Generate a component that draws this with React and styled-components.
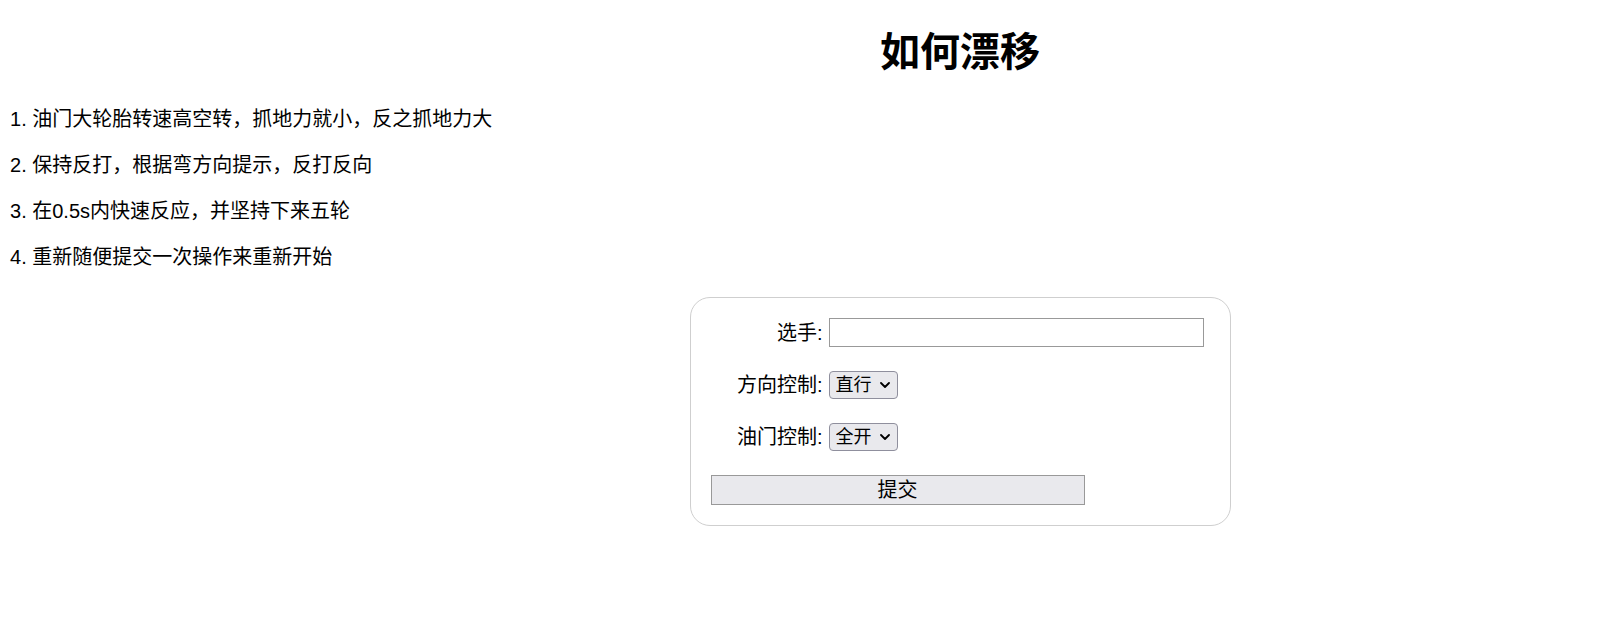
import React from "react";
import styled, { createGlobalStyle } from "styled-components";

const GlobalStyle = createGlobalStyle`
  body {
    margin: 0;
    background: #fff;
    color: #000;
    font-family: "Liberation Sans", "Noto Sans CJK SC", sans-serif;
  }
`;

const steps = [
  "油门大轮胎转速高空转，抓地力就小，反之抓地力大",
  "保持反打，根据弯方向提示，反打反向",
  "在0.5s内快速反应，并坚持下来五轮",
  "重新随便提交一次操作来重新开始",
];

const Chevron = () => (
  <Arrow viewBox="0 0 10 6" aria-hidden="true">
    <path d="M1 1l4 4 4-4" />
  </Arrow>
);

const Dropdown = ({ id, defaultValue, options }) => (
  <SelectWrap>
    <Select id={id} defaultValue={defaultValue}>
      {options.map((o) => (
        <option key={o.value} value={o.value}>
          {o.label}
        </option>
      ))}
    </Select>
    <Chevron />
  </SelectWrap>
);

const App = () => {
  return (
    <Page>
      <GlobalStyle />
      <Stage>
        <Title>如何漂移</Title>
      </Stage>
      <Steps>
        {steps.map((text, i) => (
          <Step key={i}>
            {i + 1}. {text}
          </Step>
        ))}
      </Steps>
      <Stage>
        <FormBox onSubmit={(e) => e.preventDefault()}>
          <Row>
            <Label htmlFor="player">选手:</Label>
            <TextInput id="player" type="text" />
          </Row>
          <Row>
            <Label htmlFor="dir">方向控制:</Label>
            <Dropdown
              id="dir"
              defaultValue="straight"
              options={[
                { value: "straight", label: "直行" },
                { value: "left", label: "左转" },
                { value: "right", label: "右转" },
              ]}
            />
          </Row>
          <Row>
            <Label htmlFor="gas">油门控制:</Label>
            <Dropdown
              id="gas"
              defaultValue="full"
              options={[
                { value: "full", label: "全开" },
                { value: "half", label: "半开" },
                { value: "off", label: "关闭" },
              ]}
            />
          </Row>
          <SubmitButton type="submit">提交</SubmitButton>
        </FormBox>
      </Stage>
    </Page>
  );
};

export default App;

const Page = styled.div`
  padding: 26px 8px 40px 10px;
`;

const Stage = styled.div`
  display: flex;
  justify-content: center;
  padding-left: 312px;
`;

const Title = styled.h1`
  margin: 0;
  font-size: 40px;
  line-height: 52px;
  font-weight: 700;
`;

const Steps = styled.div`
  display: flex;
  flex-direction: column;
  gap: 20px;
  margin: 28px 0 27px;
`;

const Step = styled.p`
  margin: 0;
  font-size: 20px;
  line-height: 26px;
`;

const FormBox = styled.form`
  box-sizing: border-box;
  width: 541px;
  padding: 20px;
  border: 1px solid #cfcfcf;
  border-radius: 20px;
  display: flex;
  flex-direction: column;
  gap: 24px;
`;

const Row = styled.div`
  display: grid;
  grid-template-columns: 112px auto;
  column-gap: 6px;
  align-items: center;
  justify-content: start;
`;

const Label = styled.label`
  text-align: right;
  font-size: 20px;
  line-height: 26px;
`;

const TextInput = styled.input`
  box-sizing: border-box;
  width: 375px;
  height: 29px;
  margin: 0;
  border: 1px solid #999;
  border-radius: 0;
  padding: 2px 4px;
  font-size: 18px;
  font-family: inherit;
  outline: none;
`;

const SelectWrap = styled.span`
  position: relative;
  display: inline-block;
  width: 69px;
  height: 28px;
`;

const Select = styled.select`
  appearance: none;
  box-sizing: border-box;
  width: 69px;
  height: 28px;
  margin: 0;
  padding: 0 0 0 6px;
  border: 1px solid #8f8f9d;
  border-radius: 4px;
  background: #e9e9ed;
  color: #000;
  font-size: 18px;
  font-family: inherit;
`;

const Arrow = styled.svg`
  position: absolute;
  right: 8px;
  top: 11px;
  width: 10px;
  height: 6px;
  fill: none;
  stroke: #000;
  stroke-width: 1.8;
  stroke-linecap: round;
  stroke-linejoin: round;
  pointer-events: none;
`;

const SubmitButton = styled.button`
  box-sizing: border-box;
  width: 374px;
  height: 30px;
  margin: 0;
  padding: 0;
  border: 1px solid #999;
  border-radius: 0;
  background: #e9e9ed;
  color: #000;
  font-size: 20px;
  font-family: inherit;
  line-height: 26px;
  cursor: pointer;
`;
